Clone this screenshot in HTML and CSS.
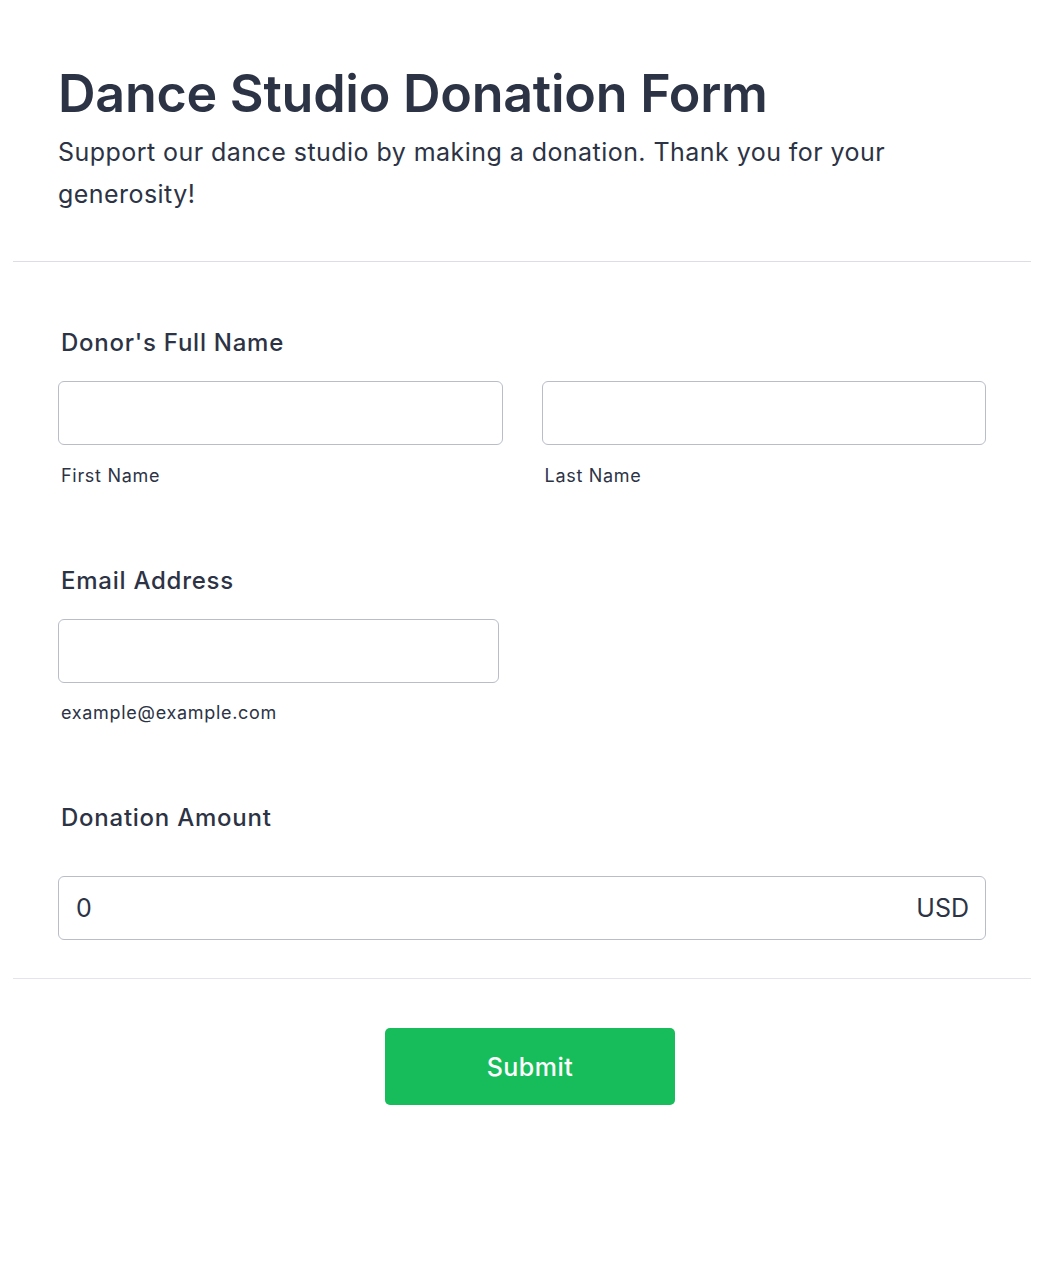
FILE: index.html
```html
<!DOCTYPE html>
<html lang="en">
<head>
<meta charset="utf-8">
<title>Dance Studio Donation Form</title>
<link rel="stylesheet" href="styles.css">
</head>
<body>
<form class="form">
  <header class="form-header">
    <h1 class="form-title">Dance Studio Donation Form</h1>
    <p class="form-subtitle">Support our dance studio by making a donation. Thank you for your generosity!</p>
  </header>
  <div class="form-body">
    <div class="field">
      <label class="field-label">Donor's Full Name</label>
      <div class="name-row">
        <div class="sub-field">
          <input class="text-input" type="text">
          <span class="sub-label">First Name</span>
        </div>
        <div class="sub-field">
          <input class="text-input" type="text">
          <span class="sub-label">Last Name</span>
        </div>
      </div>
    </div>
    <div class="field">
      <label class="field-label">Email Address</label>
      <div class="email-col">
        <input class="text-input" type="email">
        <span class="sub-label sub-label-email">example@example.com</span>
      </div>
    </div>
    <div class="field field-amount">
      <label class="field-label">Donation Amount</label>
      <div class="amount-box">
        <span class="amount-value">0</span>
        <span class="amount-currency">USD</span>
      </div>
    </div>
  </div>
  <div class="form-footer">
    <button class="submit-btn" type="button">Submit</button>
  </div>
</form>
</body>
</html>
```
FILE: styles.css
```css
html, body {
  margin: 0;
  padding: 0;
  background: #ffffff;
}
body {
  font-family: Inter, "Noto Sans", sans-serif;
  color: #2c3345;
}
.form {
  margin: 0 13px;
}
.form-header {
  padding: 63px 45px 46px;
  border-bottom: 1px solid #dcdee4;
}
.form-title {
  margin: 0;
  font-size: 52px;
  line-height: 62px;
  font-weight: 600;
  letter-spacing: -0.25px;
}
.form-subtitle {
  margin: 6px 0 0;
  font-size: 25px;
  line-height: 42px;
  font-weight: 400;
  letter-spacing: 0.45px;
}
.form-body {
  padding: 65px 45px 38px;
  border-bottom: 1px solid #e3e5ea;
  display: flex;
  flex-direction: column;
  gap: 77px;
}
.field {
  display: flex;
  flex-direction: column;
}
.field-label {
  font-size: 24px;
  line-height: 32px;
  font-weight: 500;
  letter-spacing: 0.75px;
  padding-left: 3px;
  margin-bottom: 22px;
}
.name-row {
  display: grid;
  grid-template-columns: 1fr 1fr;
  gap: 39px;
}
.sub-field, .email-col {
  display: flex;
  flex-direction: column;
}
.email-col {
  width: 441px;
}
.text-input {
  box-sizing: border-box;
  height: 64px;
  width: 100%;
  border: 1px solid #b8bdc9;
  border-radius: 6px;
  background: #fff;
  margin: 0;
  font-family: inherit;
  font-size: 24px;
}
.sub-label {
  margin-top: 19px;
  padding-left: 3px;
  font-size: 18px;
  line-height: 24px;
  letter-spacing: 0.7px;
  color: #2c3345;
}
.sub-label-email {
  margin-top: 18px;
}
.field-amount .field-label {
  margin-bottom: 42px;
}
.amount-box {
  box-sizing: border-box;
  height: 64px;
  border: 1px solid #b8bdc9;
  border-radius: 6px;
  display: flex;
  align-items: center;
  justify-content: space-between;
  padding: 0 16px 0 17px;
  font-size: 25px;
}
.form-footer {
  display: flex;
  justify-content: center;
  padding: 49px 0 0 16px;
}
.submit-btn {
  width: 290px;
  height: 77px;
  border: none;
  border-radius: 5px;
  background: #18bd5b;
  color: #fff;
  font-family: inherit;
  font-size: 25px;
  font-weight: 500;
  letter-spacing: 0.5px;
}
```
